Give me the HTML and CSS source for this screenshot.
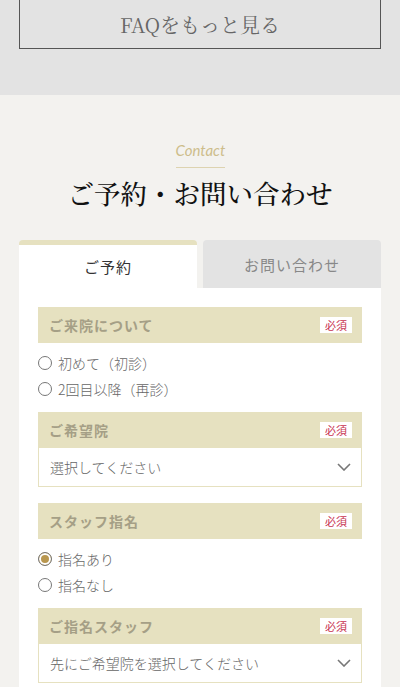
FILE: index.html
```html
<!DOCTYPE html>
<html lang="ja">
<head>
    <meta charset="UTF-8">
    <meta name="viewport" content="width=device-width, initial-scale=1.0">
    <title>ご予約・お問い合わせ</title>
    <link rel="stylesheet" href="styles.css">
</head>
<body>
    <div class="faq">
        <a class="faq-btn" href="#">FAQをもっと見る</a>
    </div>

    <section class="contact">
        <p class="sub">Contact</p>
        <h2>ご予約・お問い合わせ</h2>

        <div class="tabs">
            <div class="tab active">ご予約</div>
            <div class="tab">お問い合わせ</div>
        </div>

        <div class="panel">
            <div class="field-head">
                <span>ご来院について</span>
                <span class="req">必須</span>
            </div>
            <div class="radios">
                <label><input type="radio" name="visit"> 初めて（初診）</label>
                <label><input type="radio" name="visit"> 2回目以降（再診）</label>
            </div>

            <div class="field-head">
                <span>ご希望院</span>
                <span class="req">必須</span>
            </div>
            <div class="select">
                <span>選択してください</span>
                <svg width="14" height="8" viewBox="0 0 14 8"><path d="M1 1l6 6 6-6" fill="none" stroke="#777" stroke-width="1.6"/></svg>
            </div>

            <div class="field-head">
                <span>スタッフ指名</span>
                <span class="req">必須</span>
            </div>
            <div class="radios">
                <label><input type="radio" name="staff" checked> 指名あり</label>
                <label><input type="radio" name="staff"> 指名なし</label>
            </div>

            <div class="field-head">
                <span>ご指名スタッフ</span>
                <span class="req">必須</span>
            </div>
            <div class="select">
                <span>先にご希望院を選択してください</span>
                <svg width="14" height="8" viewBox="0 0 14 8"><path d="M1 1l6 6 6-6" fill="none" stroke="#777" stroke-width="1.6"/></svg>
            </div>
        </div>
    </section>
</body>
</html>
```

FILE: styles.css
```css
body {
    margin: 0;
    background-color: #f3f2ef;
    font-family: "Noto Sans CJK JP", sans-serif;
    color: #333;
}
.faq {
    background-color: #e3e3e3;
    padding: 0 19px 46px;
}
.faq-btn {
    display: flex;
    align-items: center;
    justify-content: center;
    height: 48px;
    border: 1px solid #555;
    border-top: 0;
    color: #666;
    text-decoration: none;
    font-family: "Noto Serif CJK JP", "Liberation Serif", serif;
    font-size: 20px;
}
.contact {
    padding-top: 45px;
}
.sub {
    margin: 0 auto;
    width: 49px;
    text-align: center;
    font-family: Lato, sans-serif;
    font-style: italic;
    font-size: 15px;
    line-height: 20px;
    color: #cdbd8b;
    padding-bottom: 7px;
    border-bottom: 1px solid #ddd3b0;
}
h2 {
    margin: 7px 0 29px;
    text-align: center;
    font-family: "Noto Serif CJK JP", "Liberation Serif", serif;
    font-weight: 500;
    font-size: 26.5px;
    line-height: 36px;
    color: #111;
}
.tabs {
    display: grid;
    grid-template-columns: 1fr 1fr;
    gap: 6px;
    margin: 0 19px;
}
.tab {
    height: 48px;
    display: flex;
    align-items: center;
    justify-content: center;
    font-size: 15px;
    letter-spacing: 1px;
    background-color: #e3e3e3;
    color: #888;
    border-radius: 4px 4px 0 0;
}
.tab.active {
    background-color: white;
    color: #333;
    border-top: 5px solid #e6e1c0;
    height: 43px;
}
.panel {
    background-color: white;
    margin: 0 19px;
    padding: 19px 19px 20px;
}
.field-head {
    height: 36px;
    display: flex;
    align-items: center;
    justify-content: space-between;
    padding: 0 10px 0 11px;
    background-color: #e6e1c0;
    color: #a59f86;
    font-weight: bold;
    font-size: 14px;
    letter-spacing: 1px;
}
.req {
    background-color: white;
    color: #c8324f;
    font-size: 11px;
    font-weight: normal;
    letter-spacing: 0;
    width: 32px;
    height: 16px;
    line-height: 16px;
    text-align: center;
}
.radios {
    padding: 7px 0 10px;
}
.radios label {
    display: flex;
    align-items: center;
    gap: 6px;
    height: 26px;
    font-size: 14px;
    font-weight: 300;
    color: #666;
}
.radios input {
    appearance: none;
    margin: 0;
    width: 14px;
    height: 14px;
    border: 1px solid #777;
    border-radius: 50%;
    box-sizing: border-box;
}
.radios input:checked {
    background-color: #b9974f;
    box-shadow: inset 0 0 0 2px white;
}
.select {
    height: 38px;
    display: flex;
    align-items: center;
    justify-content: space-between;
    padding: 0 10px 0 11px;
    border: 1px solid #e6e1c0;
    border-top: 0;
    margin-bottom: 16px;
    font-size: 14px;
    font-weight: 300;
    color: #666;
}
```
